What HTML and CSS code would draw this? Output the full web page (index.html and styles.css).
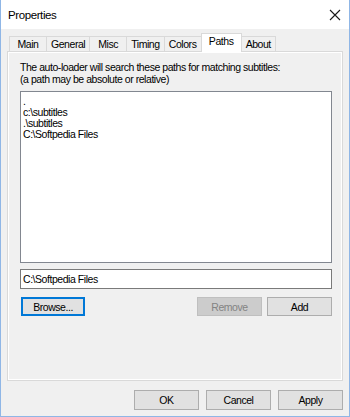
FILE: index.html
```html
<!DOCTYPE html>
<html lang="en">
<head>
  <meta charset="UTF-8" />
  <title>Properties</title>
  <link rel="stylesheet" href="styles.css">
</head>
<body>
  <div class="window">
    <div class="titlebar">
      <span class="title">Properties</span>
      <svg class="close" width="12" height="12" viewBox="0 0 12 12">
        <path d="M1 1 L11 11 M11 1 L1 11" stroke="#1a1a1a" stroke-width="1.1" fill="none" />
      </svg>
    </div>

    <div class="content">
      <div class="tabs">
        <div class="tab">Main</div>
        <div class="tab">General</div>
        <div class="tab">Misc</div>
        <div class="tab">Timing</div>
        <div class="tab">Colors</div>
        <div class="tab active">Paths</div>
        <div class="tab">About</div>
      </div>

      <div class="panel">
        <p class="info">The auto-loader will search these paths for matching subtitles:<br>(a path may be absolute or relative)</p>

        <div class="listbox">
          <div class="item">.</div>
          <div class="item">c:\subtitles</div>
          <div class="item">.\subtitles</div>
          <div class="item">C:\Softpedia Files</div>
        </div>

        <div class="edit">C:\Softpedia Files</div>

        <div class="row">
          <button class="btn focused">Browse...</button>
          <span class="spacer"></span>
          <button class="btn" disabled>Remove</button>
          <button class="btn">Add</button>
        </div>
      </div>

      <div class="footer">
        <button class="btn">OK</button>
        <button class="btn">Cancel</button>
        <button class="btn">Apply</button>
      </div>
    </div>
  </div>
</body>
</html>
```

FILE: styles.css
```css
body {
  margin: 0;
  background: #ffffff;
  font-family: 'Liberation Sans', Arial, sans-serif;
  font-size: 10.5px;
  letter-spacing: -0.45px;
  color: #000;
}

.window {
  width: 350px;
  height: 417px;
  box-sizing: border-box;
  border: 1px solid #8fb6e6;
  border-top: none;
  display: flex;
  flex-direction: column;
}

.titlebar {
  height: 29px;
  background: #ffffff;
  display: flex;
  align-items: center;
  justify-content: space-between;
  padding: 0 8px 0 7px;
}

.title {
  font-size: 11.5px;
  letter-spacing: -0.4px;
}

.content {
  flex: 1;
  background: #f0f0f0;
  padding: 4px 6px 0 6px;
  display: flex;
  flex-direction: column;
}

.tabs {
  display: flex;
  align-items: flex-end;
  padding-left: 2px;
  height: 18px;
  position: relative;
  z-index: 1;
}

.tab {
  min-width: 37px;
  height: 15px;
  line-height: 15px;
  padding: 0 4px;
  text-align: center;
  border: 1px solid #d9d9d9;
  border-bottom: none;
  border-right: none;
  box-sizing: border-box;
  background: #f0f0f0;
}

.tab:last-child {
  border-right: 1px solid #d9d9d9;
  min-width: 34px;
}

.tab.active {
  min-width: 41px;
  height: 19px;
  margin-bottom: -1px;
  background: #ffffff;
  border-right: 1px solid #d9d9d9;
}

.tab.active + .tab {
  border-left: none;
}

.panel {
  height: 330px;
  box-sizing: border-box;
  border: 1px solid #d9d9d9;
  box-shadow: inset 0 0 0 1px #ffffff;
  padding: 9px 10px 0 12px;
}

.info {
  margin: 0 0 6px 0;
  line-height: 12px;
}

.listbox {
  height: 172px;
  box-sizing: border-box;
  border: 1px solid #828790;
  background: #ffffff;
  padding: 4px 2px;
}

.item {
  line-height: 11px;
}

.edit {
  margin-top: 6px;
  height: 20px;
  line-height: 18px;
  box-sizing: border-box;
  border: 1px solid #7a7a7a;
  background: #ffffff;
  padding: 0 2px;
}

.row {
  display: flex;
  gap: 5px;
  margin-top: 8px;
  padding-left: 1px;
}

.spacer {
  flex: 1;
}

.btn {
  width: 65px;
  height: 19px;
  padding: 0;
  border: 1px solid #adadad;
  background: #e1e1e1;
  font-family: 'Liberation Sans', Arial, sans-serif;
  font-size: 10.5px;
  letter-spacing: -0.45px;
  color: #000;
}

.btn.focused {
  border: 1px solid #0078d7;
  box-shadow: inset 0 0 0 1px #0078d7;
  width: 64px;
}

.btn:disabled {
  background: #cccccc;
  border-color: #bfbfbf;
  color: #838383;
}

.footer {
  display: flex;
  justify-content: flex-end;
  gap: 7px;
  margin-top: 9px;
}

.footer .btn {
  height: 20px;
}
```
